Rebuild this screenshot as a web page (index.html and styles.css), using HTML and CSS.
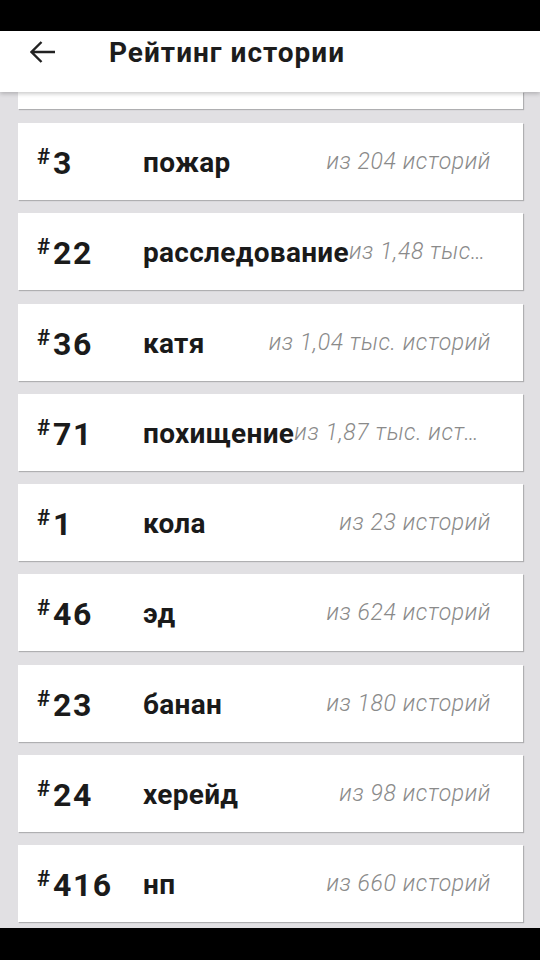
FILE: index.html
```html
<!DOCTYPE html>
<html lang="ru">
<head>
    <meta charset="UTF-8">
    <meta name="viewport" content="width=device-width, initial-scale=1.0">
    <title>Рейтинг истории</title>
    <link rel="stylesheet" href="styles.css">
</head>
<body>

<div class="status-bar"></div>

<div class="app-bar">
    <button class="back-button">
        <svg width="26" height="22" viewBox="0 0 26 22">
            <path d="M1.5 11H25M11.5 1L1.5 11l10 10" fill="none" stroke="#222" stroke-width="2.4"/>
        </svg>
    </button>
    <h1>Рейтинг истории</h1>
</div>

<div class="list">
    <!-- карточка, прокрученная под шапку -->
    <div class="card card-cut"></div>

    <div class="card">
        <div class="rank"><span class="hash">#</span>3</div>
        <div class="tag">пожар</div>
        <div class="count">из 204 историй</div>
    </div>
    <div class="card">
        <div class="rank"><span class="hash">#</span>22</div>
        <div class="tag">расследование</div>
        <div class="count">из 1,48 тыс. историй</div>
    </div>
    <div class="card">
        <div class="rank"><span class="hash">#</span>36</div>
        <div class="tag">катя</div>
        <div class="count">из 1,04 тыс. историй</div>
    </div>
    <div class="card">
        <div class="rank"><span class="hash">#</span>71</div>
        <div class="tag">похищение</div>
        <div class="count">из 1,87 тыс. историй</div>
    </div>
    <div class="card">
        <div class="rank"><span class="hash">#</span>1</div>
        <div class="tag">кола</div>
        <div class="count">из 23 историй</div>
    </div>
    <div class="card">
        <div class="rank"><span class="hash">#</span>46</div>
        <div class="tag">эд</div>
        <div class="count">из 624 историй</div>
    </div>
    <div class="card">
        <div class="rank"><span class="hash">#</span>23</div>
        <div class="tag">банан</div>
        <div class="count">из 180 историй</div>
    </div>
    <div class="card">
        <div class="rank"><span class="hash">#</span>24</div>
        <div class="tag">херейд</div>
        <div class="count">из 98 историй</div>
    </div>
    <div class="card">
        <div class="rank"><span class="hash">#</span>416</div>
        <div class="tag">нп</div>
        <div class="count">из 660 историй</div>
    </div>
</div>

<div class="nav-bar"></div>

</body>
</html>
```

FILE: styles.css
```css
body {
    font-family: Roboto, "Noto Sans", Arial, sans-serif;
    margin: 0;
    padding: 0;
    background-color: #000;
    height: 960px;
    overflow: hidden;
}
.status-bar {
    height: 31px;
    background-color: #000;
}
.app-bar {
    position: relative;
    z-index: 2;
    height: 56px;
    background-color: #fff;
    display: flex;
    align-items: flex-start;
    padding: 5px 0 0 30px;
    box-shadow: 0 2px 4px rgba(0, 0, 0, 0.2);
}
.back-button {
    background: none;
    border: none;
    padding: 0;
    width: 26px;
    height: 22px;
    display: flex;
    margin-top: 5px;
}
.app-bar h1 {
    margin: 0 0 0 53px;
    font-size: 28px;
    font-weight: 700;
    letter-spacing: 1px;
    color: #1c1c1c;
}
.list {
    height: 836px;
    overflow: hidden;
    background-color: #e1e0e3;
}
.card {
    background-color: #fff;
    height: 77px;
    margin: 0 17px 13.25px 18px;
    box-shadow: 1px 1px 1px rgba(0, 0, 0, 0.22);
    display: flex;
    align-items: center;
    padding: 0 32px 0 19px;
    white-space: nowrap;
}
.card-cut {
    height: 17px;
    margin-bottom: 14px;
}
.rank {
    width: 106px;
    flex-shrink: 0;
    font-size: 32px;
    font-weight: 700;
    letter-spacing: 1.5px;
    color: #1b1b1b;
    margin-top: 3px;
}
.hash {
    font-size: 22px;
    vertical-align: 10px;
    letter-spacing: 0;
    margin-right: 3px;
}
.tag {
    flex-shrink: 0;
    font-size: 28px;
    font-weight: 700;
    letter-spacing: 0.3px;
    color: #1a1a1a;
    margin-top: 2px;
}
.count {
    flex: 1;
    min-width: 0;
    text-align: right;
    overflow: hidden;
    text-overflow: ellipsis;
    font-size: 23px;
    font-weight: 300;
    font-style: italic;
    letter-spacing: 0.6px;
    color: #8a8a8a;
}
.nav-bar {
    height: 32px;
    background-color: #000;
}
```
